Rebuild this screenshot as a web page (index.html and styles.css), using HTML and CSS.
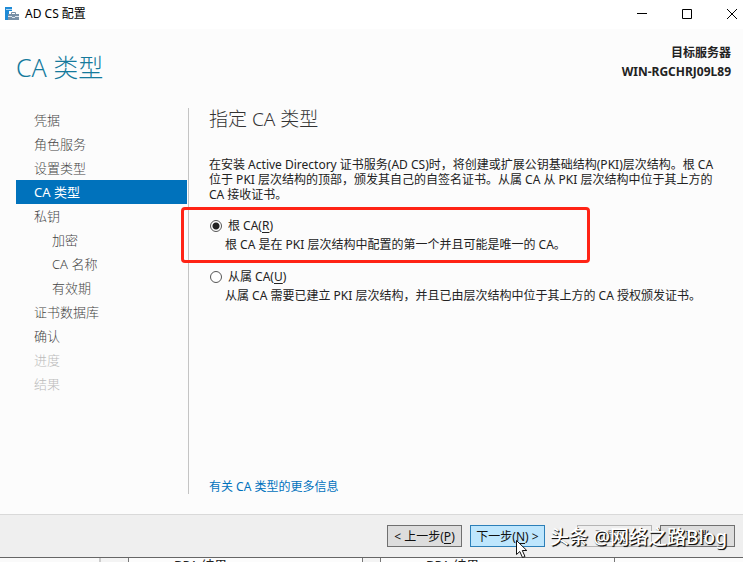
FILE: index.html
```html
<!DOCTYPE html>
<html lang="zh-CN">
<head>
<meta charset="utf-8">
<title>AD CS 配置</title>
<link rel="stylesheet" href="styles.css">
</head>
<body>
<header class="titlebar">
  <svg class="app-icon" width="16" height="16" viewBox="0 0 16 16" aria-hidden="true">
    <path fill="#1e8ad6" d="M0 1h7v4H4v3H3v6H0z"/>
    <path fill="#a9d3f2" d="M1 3h6v1H1z"/>
    <path fill="none" stroke="#7890a6" d="M6.500 8V6.500h4V8"/>
    <path fill="#7890a6" d="M3 8h11v6H3z"/>
    <path fill="#dbe5ee" d="M3 10h4v1h3v-1h4v1h-4v1H7v-1H3z"/>
  </svg>
  <span class="window-title">AD CS 配置</span>
  <div class="window-controls">
    <button type="button" aria-label="最小化"><svg width="12" height="12" viewBox="0 0 12 12"><path d="M1 5.500h10"/></svg></button>
    <button type="button" aria-label="最大化"><svg width="12" height="12" viewBox="0 0 12 12"><path d="M1.500 1.500h9v9h-9z"/></svg></button>
    <button type="button" aria-label="关闭"><svg width="12" height="12" viewBox="0 0 12 12"><path d="M1 1l10 10M11 1L1 11"/></svg></button>
  </div>
</header>
<main class="wizard">
  <div class="heading">
    <h1>CA 类型</h1>
    <div class="server"><div>目标服务器</div><div>WIN-RGCHRJ09L89</div></div>
  </div>
  <div class="columns">
    <nav class="steps">
      <a href="#">凭据</a>
      <a href="#">角色服务</a>
      <a href="#">设置类型</a>
      <a href="#" class="current" aria-current="step">CA 类型</a>
      <a href="#">私钥</a>
      <a href="#" class="sub">加密</a>
      <a href="#" class="sub">CA 名称</a>
      <a href="#" class="sub">有效期</a>
      <a href="#">证书数据库</a>
      <a href="#">确认</a>
      <a class="disabled">进度</a>
      <a class="disabled">结果</a>
    </nav>
    <section class="content">
      <h2>指定 CA 类型</h2>
      <p class="intro">在安装 Active Directory 证书服务(AD CS)时，将创建或扩展公钥基础结构(PKI)层次结构。根 CA 位于 PKI 层次结构的顶部，颁发其自己的自签名证书。从属 CA 从 PKI 层次结构中位于其上方的 CA 接收证书。</p>
      <div class="option marked">
        <input type="radio" name="ca" id="root" checked>
        <label for="root">根 CA(<u>R</u>)</label>
        <p>根 CA 是在 PKI 层次结构中配置的第一个并且可能是唯一的 CA。</p>
      </div>
      <div class="option">
        <input type="radio" name="ca" id="subordinate">
        <label for="subordinate">从属 CA(<u>U</u>)</label>
        <p>从属 CA 需要已建立 PKI 层次结构，并且已由层次结构中位于其上方的 CA 授权颁发证书。</p>
      </div>
      <a class="more" href="#">有关 CA 类型的更多信息</a>
    </section>
  </div>
</main>
<footer class="actions">
  <button type="button">&lt; 上一步(<u>P</u>)</button>
  <button type="button" class="primary">下一步(<u>N</u>) &gt;
    <svg class="pointer" width="14" height="20" viewBox="0 0 14 20" aria-hidden="true"><path fill="#fff" stroke="#111" d="M1.500 1.500v14l3.300-3 2.700 6 2.500-1-2.700-6h4.500z"/></svg>
  </button>
  <button type="button" class="configure" disabled>配置(<u>C</u>)</button>
  <button type="button">取消</button>
  <div class="watermark">头条 @网络之路Blog</div>
</footer>
<div class="tiles">
  <div class="tile-end"></div>
  <div class="tile">BPA 结果</div>
  <div class="tile">BPA 结果</div>
</div>
</body>
</html>
```
FILE: styles.css
```css
* { box-sizing: border-box; }
body {
  margin: 0;
  height: 100vh;
  display: flex;
  flex-direction: column;
  overflow: hidden;
  background: #fcfcfc;
  color: #222;
  font: 12px/15px "Noto Sans", "Noto Sans CJK SC", sans-serif;
}
h1, h2, p { margin: 0; font-weight: 300; }
a { text-decoration: none; }
u { text-underline-offset: 2px; }

.titlebar {
  height: 29px;
  flex: none;
  display: flex;
  align-items: center;
  padding: 0 5px 2px;
  background: #fff;
  color: #000;
}
.window-title { margin-left: 4px; }
.window-controls { margin-left: auto; display: flex; gap: 33px; }
.window-controls button {
  width: 12px;
  height: 12px;
  padding: 0;
  border: 0;
  background: none;
}
.window-controls svg { display: block; fill: none; stroke: #000; }

.wizard { flex: 1; display: flex; flex-direction: column; padding: 14px 12px 20px 16px; }
.heading { display: flex; justify-content: space-between; height: 65px; }
h1 {
  padding-top: 6px;
  color: #157a9c;
  font: 300 25px/36px "Noto Sans", "Noto Sans CJK SC Light", "Noto Sans CJK SC", sans-serif;
}
.server { font-weight: 700; line-height: 19px; text-align: right; }

.columns { flex: 1; display: flex; }
.steps {
  width: 173px;
  flex: none;
  display: flex;
  flex-direction: column;
  padding-right: 1px;
  border-right: 1px solid #c4c4c4;
}
.steps a {
  padding-left: 18px;
  color: #444;
  font-size: 13px;
  font-weight: 300;
  line-height: 24px;
}
.steps .current { background: #0072bc; color: #fff; font-weight: 400; }
.steps .sub { padding-left: 36px; }
.steps .disabled { color: #bbb; }

.content { flex: 1; display: flex; flex-direction: column; padding-left: 20px; }
h2 {
  color: #333;
  font: 300 19px/22px "Noto Sans", "Noto Sans CJK SC Light", "Noto Sans CJK SC", sans-serif;
}
p { font-weight: 400; }
.intro { margin: 27px 0 14px; padding-right: 8px; }
.option {
  position: relative;
  display: grid;
  grid-template-columns: 12px 1fr;
  column-gap: 7px;
  align-items: center;
  margin-bottom: 13px;
  line-height: 19px;
}
.option p { grid-column: 1 / -1; padding-left: 16px; }
.option input {
  appearance: none;
  width: 12px;
  height: 12px;
  margin: 0 1px;
  border: 1px solid #555;
  border-radius: 50%;
  background: #fff;
}
.option input:checked { background: radial-gradient(circle, #222 3px, #fff 4px); }
.marked::after {
  content: "";
  position: absolute;
  inset: -9px 141px -9px -28px;
  border: 3px solid #ff2416;
  border-radius: 4px;
  pointer-events: none;
}
.more { margin-top: auto; color: #0072bc; }

.actions {
  position: relative;
  height: 43px;
  flex: none;
  display: flex;
  justify-content: flex-end;
  align-items: center;
  gap: 8px;
  padding: 0 8px;
  border-top: 1px solid #d9d9d9;
  background: #efefef;
}
.actions button {
  position: relative;
  width: 75px;
  height: 22px;
  padding: 0;
  border: 1px solid #707070;
  background: #ddd;
  color: #111;
  font: inherit;
  white-space: nowrap;
}
.actions .primary { border-color: #2c7fb8; background: #bee6fd; }
.actions .configure { margin-left: 24px; border-color: #b5b5b5; background: #efefef; color: #888; }
.pointer { position: absolute; left: 44px; top: 13px; z-index: 1; }
.watermark {
  position: absolute;
  right: 16px;
  top: 9px;
  color: #fff;
  font: 500 19px/26px "Noto Sans", "Noto Sans CJK SC", sans-serif;
  text-shadow: 1px 1px 1px #111, 1px 1px 0 #222;
  white-space: nowrap;
  pointer-events: none;
}

.tiles {
  height: 5px;
  flex: none;
  display: grid;
  grid-template-columns: 101px 235px 235px;
  column-gap: 17px;
  overflow: hidden;
  border-top: 1px solid #666;
  background: linear-gradient(90deg, #f4f4f4 615px, #fcfcfc 615px);
}
.tile-end { border-right: 2px solid #ccc; background: #fafafa; }
.tile {
  position: relative;
  left: 10px;
  padding-left: 45px;
  border: solid #777;
  border-width: 0 1px;
  background: #fcfcfc;
  font-size: 13px;
}
```
